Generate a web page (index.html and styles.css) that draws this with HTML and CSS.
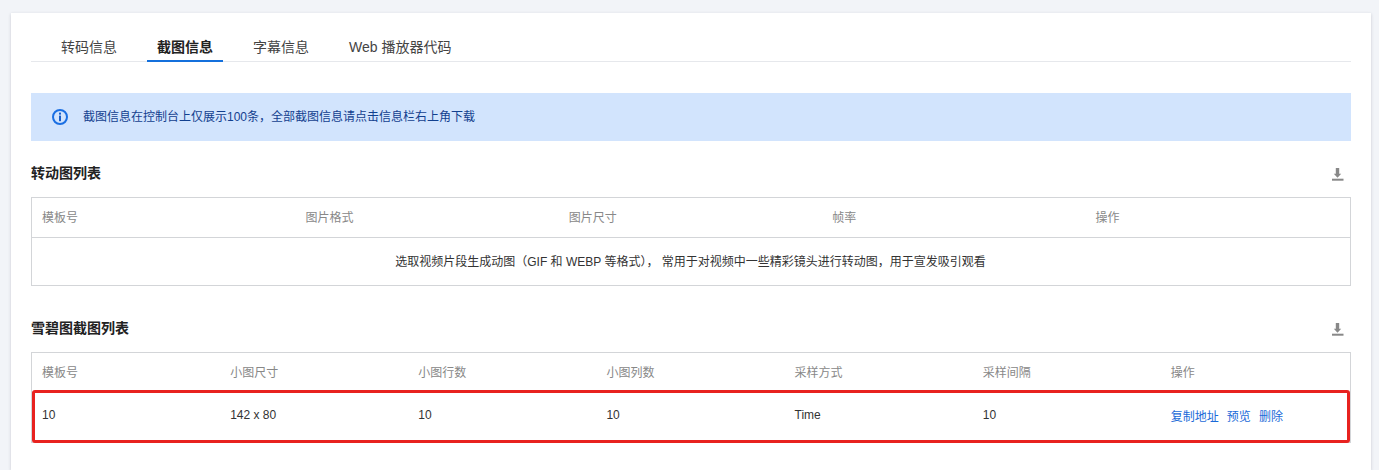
FILE: index.html
```html
<!DOCTYPE html>
<html lang="zh">
<head>
<meta charset="utf-8">
<title>截图信息</title>
<link rel="stylesheet" href="styles.css">
</head>
<body>
<main class="card">
  <nav class="tabs">
    <a class="tab">转码信息</a>
    <a class="tab active">截图信息</a>
    <a class="tab">字幕信息</a>
    <a class="tab">Web 播放器代码</a>
  </nav>
  <div class="alert">
    <svg class="alert-icon" viewBox="0 0 16 16" width="16" height="16" aria-hidden="true">
      <circle cx="8" cy="8" r="7" fill="none" stroke="#1a6fe3" stroke-width="2"/>
      <rect x="7" y="3.6" width="2" height="2" fill="#1a5fc8"/>
      <rect x="7" y="6.6" width="2" height="5.6" fill="#1a5fc8"/>
    </svg>
    <span>截图信息在控制台上仅展示100条，全部截图信息请点击信息栏右上角下载</span>
  </div>
  <section class="section first">
    <header class="section-head">
      <h2>转动图列表</h2>
      <svg class="download" viewBox="0 0 12 13" width="12" height="13" aria-hidden="true">
        <path d="M3.8 0h3.4v5.8h2L5.5 9.8 1.8 5.8h2z" fill="#888"/>
        <rect x="0" y="10.7" width="11.5" height="2" fill="#888"/>
      </svg>
    </header>
    <div class="table-box">
      <table class="grid">
        <thead>
          <tr><th>模板号</th><th>图片格式</th><th>图片尺寸</th><th>帧率</th><th>操作</th></tr>
        </thead>
        <tbody>
          <tr><td class="empty" colspan="5">选取视频片段生成动图（GIF 和 WEBP 等格式）， 常用于对视频中一些精彩镜头进行转动图，用于宣发吸引观看</td></tr>
        </tbody>
      </table>
    </div>
  </section>
  <section class="section">
    <header class="section-head">
      <h2>雪碧图截图列表</h2>
      <svg class="download" viewBox="0 0 12 13" width="12" height="13" aria-hidden="true">
        <path d="M3.8 0h3.4v5.8h2L5.5 9.8 1.8 5.8h2z" fill="#888"/>
        <rect x="0" y="10.7" width="11.5" height="2" fill="#888"/>
      </svg>
    </header>
    <div class="table-box">
      <table class="grid">
        <thead>
          <tr><th>模板号</th><th>小图尺寸</th><th>小图行数</th><th>小图列数</th><th>采样方式</th><th>采样间隔</th><th>操作</th></tr>
        </thead>
        <tbody>
          <tr class="tall">
            <td>10</td><td>142 x 80</td><td>10</td><td>10</td><td>Time</td><td>10</td>
            <td class="actions"><a>复制地址</a><a>预览</a><a>删除</a></td>
          </tr>
        </tbody>
      </table>
      <div class="highlight"></div>
    </div>
  </section>
</main>
</body>
</html>
```
FILE: styles.css
```css
* { box-sizing: border-box; }
html, body { height: 100%; }
body {
  margin: 0;
  height: 470px;
  overflow: hidden;
  background: #f2f4f8;
  padding: 13px 8px 0 11px;
  font-family: "Liberation Sans", "Noto Sans CJK SC", sans-serif;
  font-size: 12px;
  color: #333;
}
.card {
  background: #fff;
  height: 457px;
  padding: 20px 20px 0;
  box-shadow: 0 1px 3px rgba(54, 58, 80, 0.22);
}
.tabs {
  display: flex;
  gap: 20px;
  height: 29px;
  padding-left: 20px;
  border-bottom: 1px solid #e6e8ec;
}
.tab {
  height: 29px;
  padding: 0 10px;
  font-size: 14px;
  line-height: 28px;
  color: #444;
}
.tab.active {
  font-weight: bold;
  color: #222;
  border-bottom: 2px solid #1470dc;
}
.alert {
  display: flex;
  align-items: center;
  gap: 15px;
  height: 48px;
  margin-top: 31px;
  padding-left: 21px;
  background: #d2e4fd;
  color: #12408f;
  line-height: 18px;
}
.alert-icon { flex: none; }
.section.first { margin-top: 20px; }
.section { margin-top: 30px; }
.section-head {
  display: flex;
  justify-content: space-between;
  align-items: center;
  height: 24px;
  padding: 0 7px 2px 0;
  margin-bottom: 12px;
}
.section-head h2 {
  margin: 0;
  font-size: 14px;
  font-weight: bold;
  color: #222;
}
.download { margin-top: 4px; }
.table-box {
  position: relative;
  border: 1px solid #d3d5d8;
  background: linear-gradient(#d3d5d8, #d3d5d8) no-repeat right 39px / 1px 1px;
}
.grid {
  width: calc(100% - 1px);
  table-layout: fixed;
  border-collapse: collapse;
}
.grid th {
  height: 39px;
  padding: 0 10px 2px;
  text-align: left;
  font-weight: normal;
  color: #888;
}
.grid td {
  height: 48px;
  padding: 0 10px 2px;
  border-top: 1px solid #d3d5d8;
  color: #333;
}
.grid td.empty { text-align: center; }
.grid .tall td {
  height: 50px;
  padding-bottom: 4px;
}
.actions a {
  margin-right: 8px;
  color: #1a6ad8;
}
.highlight {
  position: absolute;
  left: 0;
  right: 0;
  top: 37px;
  height: 53px;
  border: 3px solid #e8221f;
  border-radius: 3px;
}
```
